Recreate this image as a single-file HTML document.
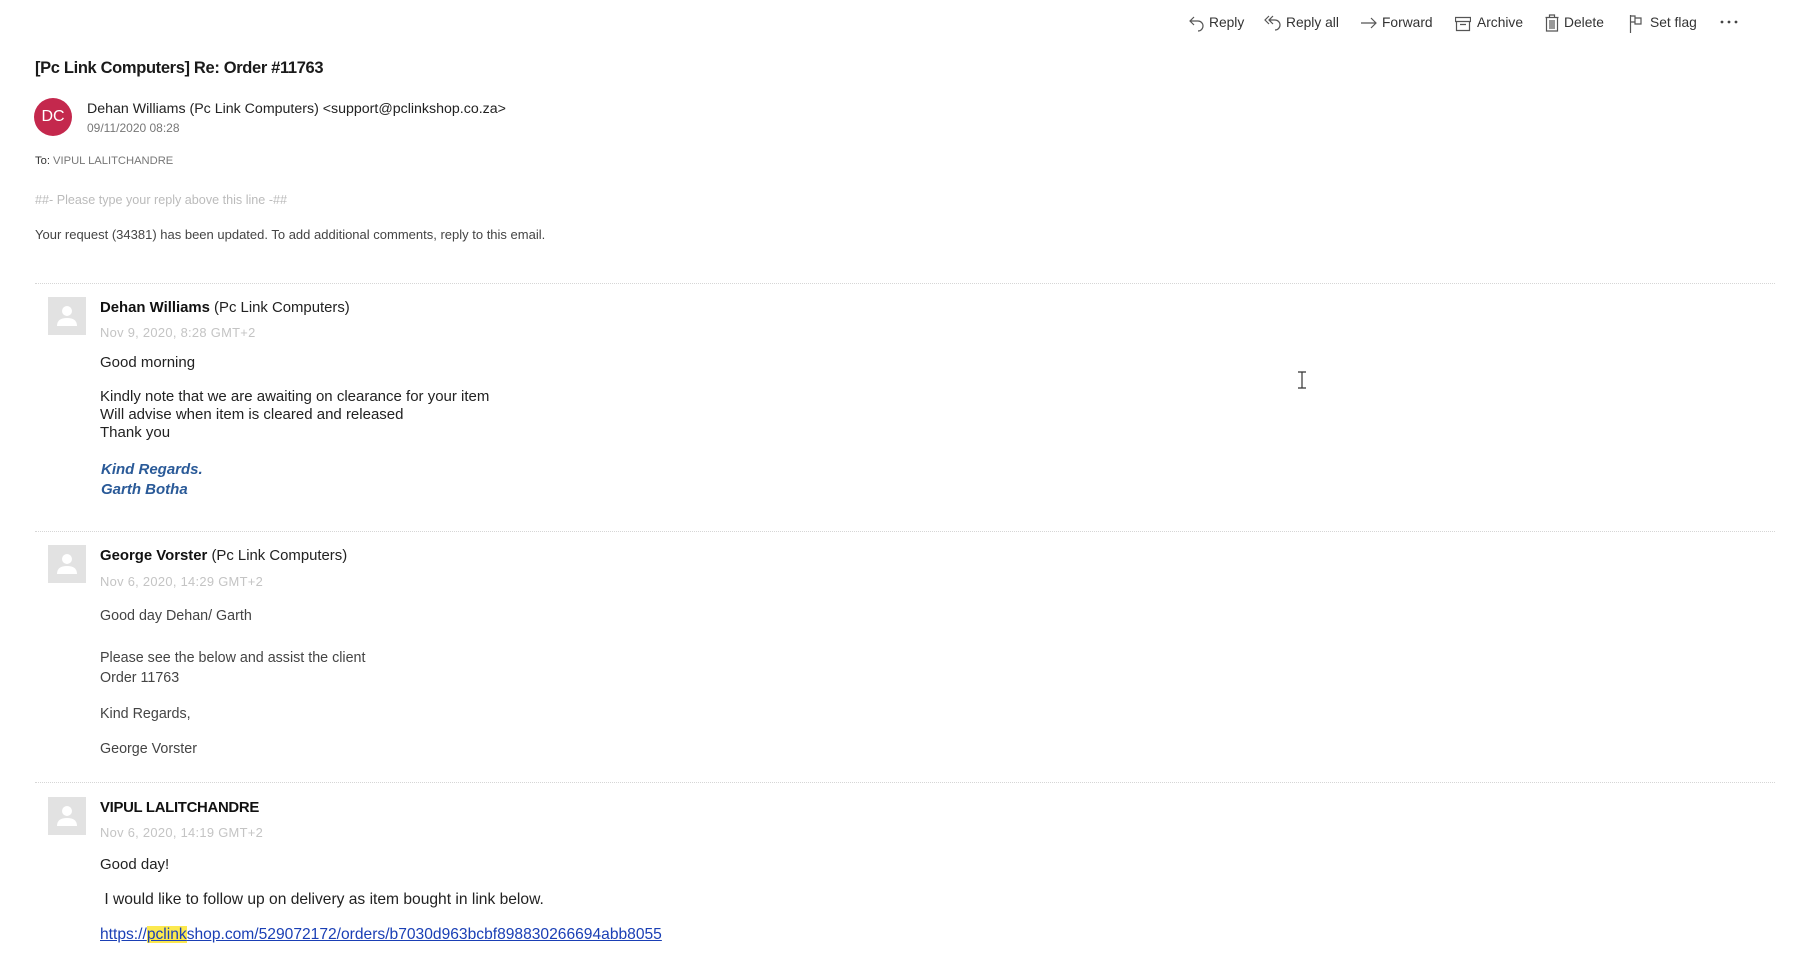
<!DOCTYPE html>
<html><head><meta charset="utf-8"><style>
html,body{margin:0;padding:0;background:#fff;width:1800px;height:954px;overflow:hidden;font-family:"Liberation Sans",sans-serif;color:#222}
.a{position:absolute;white-space:nowrap;line-height:20px}
.tb{position:absolute;top:13px;font-size:13.8px;color:#333;line-height:20px}
.tb svg{position:absolute;top:1px;left:0}
.tb span{position:absolute;white-space:nowrap}
.hr{position:absolute;left:35px;width:1740px;height:0;border-top:1px dotted #d6d6d6}
.sq{position:absolute;left:48px;width:38px;height:38px;background:#e2e2e2}
.sq svg{position:absolute;left:9px;top:8px}
.nm{font-size:14.9px;color:#222}
.nm b{color:#111}
.dt{font-size:12.9px;color:#c4c4c4;letter-spacing:.3px}
.m{font-size:15px;color:#222}
.g{font-size:14.3px;color:#444}
</style></head><body>

<!-- toolbar -->
<div class="tb" style="left:1189px"><svg width="16" height="18" viewBox="0 0 16 18" fill="none" stroke="#555" stroke-width="1.2"><path d="M5 3 L1 7 L5 11 M1 7 H9 A5 5 0 0 1 9 17"/></svg><span style="left:20px">Reply</span></div>
<div class="tb" style="left:1264px"><svg width="18" height="18" viewBox="0 0 18 18" fill="none" stroke="#555" stroke-width="1.2"><path d="M5 2 L1 6 L5 10 M9 2 L5 6 L9 10 M5 6 H11 A5 5 0 0 1 11 16"/></svg><span style="left:22px">Reply all</span></div>
<div class="tb" style="left:1360px"><svg width="18" height="18" viewBox="0 0 18 18" fill="none" stroke="#555" stroke-width="1.2"><path d="M1 9 H16 M11 4 L16 9 L11 14"/></svg><span style="left:22px">Forward</span></div>
<div class="tb" style="left:1455px"><svg width="16" height="18" viewBox="0 0 16 18" fill="none" stroke="#555" stroke-width="1.2"><path d="M0.5 3.5 H15.5 V7.5 H0.5 Z M1.5 7.5 V16.5 H14.5 V7.5 M5 10.5 H11"/></svg><span style="left:22px">Archive</span></div>
<div class="tb" style="left:1545px"><svg width="14" height="18" viewBox="0 0 14 18" fill="none" stroke="#555" stroke-width="1.2"><path d="M0.5 3.5 H13.5 M4.5 3.5 V1 H9.5 V3.5 M1.5 3.5 V17 H12.5 V3.5 M5 6 V15 M7 6 V15 M9 6 V15"/></svg><span style="left:19px">Delete</span></div>
<div class="tb" style="left:1629px"><svg width="14" height="20" viewBox="0 0 14 20" fill="none" stroke="#555" stroke-width="1.2"><path d="M1.5 1 V19 M1.5 2 H6 V4 H12 V10 H6 V8 H1.5 M6 2 V8"/></svg><span style="left:21px">Set flag</span></div>
<svg style="position:absolute;left:1720px;top:20px" width="18" height="4" viewBox="0 0 18 4"><circle cx="2" cy="2" r="1.4" fill="#444"/><circle cx="9" cy="2" r="1.4" fill="#444"/><circle cx="16" cy="2" r="1.4" fill="#444"/></svg>

<!-- header -->
<div class="a" style="left:35px;top:57px;font-size:16.5px;color:#1a1a1a;line-height:22px;font-weight:bold;letter-spacing:-0.35px">[Pc Link Computers] Re: Order #11763</div>
<div style="position:absolute;left:34px;top:98px;width:38px;height:38px;border-radius:50%;background:#c4284d;color:#fff;font-size:16px;line-height:38px;text-align:center">DC</div>
<div class="a" style="left:87px;top:99px;font-size:14.2px;color:#222">Dehan Williams (Pc Link Computers) &lt;support@pclinkshop.co.za&gt;</div>
<div class="a" style="left:87px;top:118px;font-size:12px;color:#777">09/11/2020 08:28</div>
<div class="a" style="left:35px;top:151px;font-size:11.2px;color:#777"><span style="color:#333">To:</span> VIPUL LALITCHANDRE</div>
<div class="a" style="left:35px;top:190px;font-size:12.6px;color:#bbb">##- Please type your reply above this line -##</div>
<div class="a" style="left:35px;top:225px;font-size:13px;color:#444">Your request (34381) has been updated. To add additional comments, reply to this email.</div>

<div class="hr" style="top:283px;width:1740px"></div>

<!-- msg 1 -->
<div class="sq" style="top:297px"><svg width="20" height="22" viewBox="0 0 20 22"><circle cx="10" cy="6" r="5" fill="#fff"/><path d="M0 21 Q0 13 10 13 Q20 13 20 21 Z" fill="#fff"/></svg></div>
<div class="a nm" style="left:100px;top:298px"><b>Dehan Williams</b> (Pc Link Computers)</div>
<div class="a dt" style="left:100px;top:323px">Nov 9, 2020, 8:28 GMT+2</div>
<div class="a m" style="left:100px;top:353px">Good morning</div>
<div class="a m" style="left:100px;top:388px;line-height:18px">Kindly note that we are awaiting on clearance for your item<br>Will advise when item is cleared and released<br>Thank you</div>
<div class="a" style="left:101px;top:460px;font-size:15px;font-weight:bold;font-style:italic;color:#2a5a98;line-height:20px">Kind Regards.<br>Garth Botha</div>

<div class="hr" style="top:531px;width:1740px"></div>

<!-- msg 2 -->
<div class="sq" style="top:545px"><svg width="20" height="22" viewBox="0 0 20 22"><circle cx="10" cy="6" r="5" fill="#fff"/><path d="M0 21 Q0 13 10 13 Q20 13 20 21 Z" fill="#fff"/></svg></div>
<div class="a nm" style="left:100px;top:546px"><b>George Vorster</b> (Pc Link Computers)</div>
<div class="a dt" style="left:100px;top:572px">Nov 6, 2020, 14:29 GMT+2</div>
<div class="a g" style="left:100px;top:606px">Good day Dehan/ Garth</div>
<div class="a g" style="left:100px;top:648px">Please see the below and assist the client</div>
<div class="a g" style="left:100px;top:668px">Order 11763</div>
<div class="a g" style="left:100px;top:704px">Kind Regards,</div>
<div class="a g" style="left:100px;top:739px">George Vorster</div>

<div class="hr" style="top:782px;width:1740px"></div>

<!-- msg 3 -->
<div class="sq" style="top:797px"><svg width="20" height="22" viewBox="0 0 20 22"><circle cx="10" cy="6" r="5" fill="#fff"/><path d="M0 21 Q0 13 10 13 Q20 13 20 21 Z" fill="#fff"/></svg></div>
<div class="a nm" style="left:100px;top:798px"><b style="letter-spacing:-0.3px">VIPUL LALITCHANDRE</b></div>
<div class="a dt" style="left:100px;top:823px">Nov 6, 2020, 14:19 GMT+2</div>
<div class="a m" style="left:100px;top:855px">Good day!</div>
<div class="a m" style="left:100px;top:890px;font-size:15.6px">&nbsp;I would like to follow up on delivery as item bought in link below.</div>
<div class="a" style="left:100px;top:925px;font-size:15.6px;color:#1a3fb5;text-decoration:underline">https://<span style="background:#fce94f">pclink</span>shop.com/529072172/orders/b7030d963bcbf898830266694abb8055</div>

<!-- cursor -->
<svg style="position:absolute;left:1297px;top:371px" width="10" height="18" viewBox="0 0 10 18" fill="none" stroke="#333" stroke-width="1.2"><path d="M1 1 H9 M1 17 H9 M5 1 V17"/></svg>
</body></html>
